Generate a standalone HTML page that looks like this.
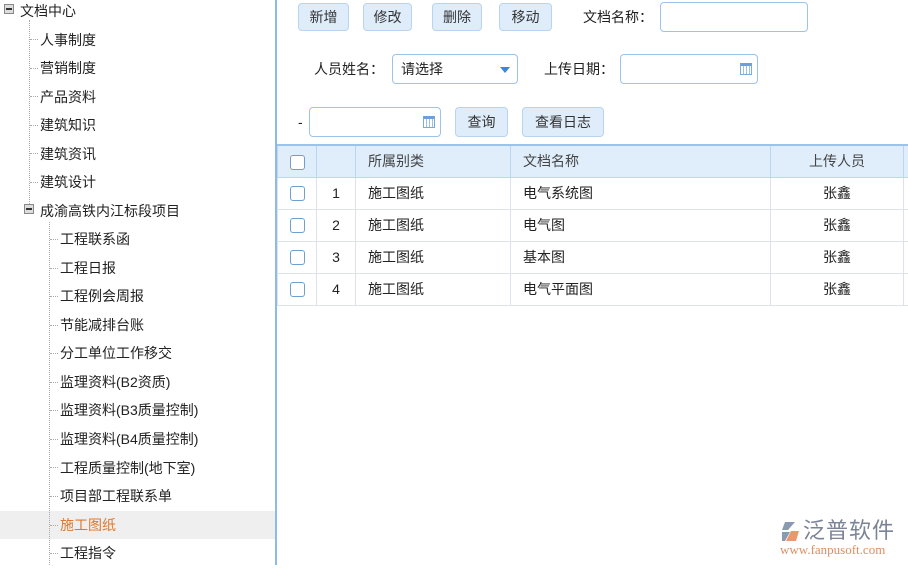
<!DOCTYPE html>
<html><head><meta charset="utf-8"><style>
*{margin:0;padding:0;box-sizing:border-box}
body{width:908px;height:565px;overflow:hidden;background:#fff;font-family:"Liberation Sans","Noto Sans CJK SC",sans-serif;font-size:14px;color:#222;position:relative}
.left{position:absolute;left:0;top:0;width:277px;height:565px;border-right:2px solid #8fb9e8}
.t{position:absolute;height:28px;line-height:22px;white-space:nowrap}
.hl{position:absolute;left:0;top:511px;width:275px;height:28px;background:#efefef}
.vl{position:absolute;border-left:1px dotted #aaa}
.hd{position:absolute;border-top:1px dotted #aaa;width:8px}
.pm{position:absolute;width:10px;height:10px;border:1px solid #888;background:#ddd}
.pm:after{content:"";position:absolute;left:1px;top:3px;width:6px;height:2px;background:#333}
.btn{position:absolute;top:3px;height:28px;border:1px solid #b8d4ee;background:#dfedfb;border-radius:4px;text-align:center;line-height:26px;color:#333}
.inp{position:absolute;height:30px;border:1px solid #9cc3ea;border-radius:4px;background:#fff}
.lbl{position:absolute;line-height:20px}
.cal{position:absolute;right:5px;top:8px;width:12px;height:12px;border:1px solid #7fa9d8;background:repeating-linear-gradient(90deg,#fff 0 2px,#9cc0e6 2px 3px);border-top:3px solid #6f9fd8}
table{position:absolute;left:277px;top:144px;width:640px;table-layout:fixed;border-collapse:collapse;border-top:2px solid #9cc3ea}
td{height:32px;border:1px solid #dde3ea;font-size:14px;padding:0 12px;overflow:hidden;white-space:nowrap}
tr.h td{background:#e0eefb;color:#444;border-color:#bcd6ef}
.cb{display:inline-block;width:15px;height:15px;border:1px solid #6f9fd0;border-radius:3px;background:#fff;vertical-align:middle}
</style></head><body>
<div class="left">
<div class="hl"></div>
<div class="pm" style="left:4px;top:4px"></div>
<div class="vl" style="left:29px;top:20px;height:186px"></div>
<div class="pm" style="left:24px;top:204px"></div>
<div class="vl" style="left:49px;top:222px;height:343px"></div>
<div class="t" style="left:20px;top:0">文档中心</div>
<div class="hd" style="left:30px;top:39px"></div><div class="t" style="left:40px;top:29px">人事制度</div>
<div class="hd" style="left:30px;top:68px"></div><div class="t" style="left:40px;top:57px">营销制度</div>
<div class="hd" style="left:30px;top:96px"></div><div class="t" style="left:40px;top:86px">产品资料</div>
<div class="hd" style="left:30px;top:125px"></div><div class="t" style="left:40px;top:114px">建筑知识</div>
<div class="hd" style="left:30px;top:153px"></div><div class="t" style="left:40px;top:143px">建筑资讯</div>
<div class="hd" style="left:30px;top:182px"></div><div class="t" style="left:40px;top:171px">建筑设计</div>
<div class="t" style="left:40px;top:200px">成渝高铁内江标段项目</div>
<div class="hd" style="left:50px;top:239px"></div><div class="t" style="left:60px;top:228px">工程联系函</div>
<div class="hd" style="left:50px;top:268px"></div><div class="t" style="left:60px;top:257px">工程日报</div>
<div class="hd" style="left:50px;top:296px"></div><div class="t" style="left:60px;top:285px">工程例会周报</div>
<div class="hd" style="left:50px;top:325px"></div><div class="t" style="left:60px;top:314px">节能减排台账</div>
<div class="hd" style="left:50px;top:353px"></div><div class="t" style="left:60px;top:342px">分工单位工作移交</div>
<div class="hd" style="left:50px;top:382px"></div><div class="t" style="left:60px;top:371px">监理资料(B2资质)</div>
<div class="hd" style="left:50px;top:410px"></div><div class="t" style="left:60px;top:399px">监理资料(B3质量控制)</div>
<div class="hd" style="left:50px;top:439px"></div><div class="t" style="left:60px;top:428px">监理资料(B4质量控制)</div>
<div class="hd" style="left:50px;top:467px"></div><div class="t" style="left:60px;top:457px">工程质量控制(地下室)</div>
<div class="hd" style="left:50px;top:496px"></div><div class="t" style="left:60px;top:485px">项目部工程联系单</div>
<div class="hd" style="left:50px;top:525px"></div><div class="t" style="left:60px;top:514px;color:#e0782e">施工图纸</div>
<div class="hd" style="left:50px;top:553px"></div><div class="t" style="left:60px;top:542px">工程指令</div>
</div>
<div class="btn" style="left:298px;width:51px">新增</div>
<div class="btn" style="left:363px;width:49px">修改</div>
<div class="btn" style="left:432px;width:50px">删除</div>
<div class="btn" style="left:499px;width:53px">移动</div>
<div class="lbl" style="left:583px;top:7px">文档名称：</div>
<div class="inp" style="left:660px;top:2px;width:148px"></div>
<div class="lbl" style="left:314px;top:59px">人员姓名：</div>
<div class="inp" style="left:392px;top:54px;width:126px;padding-left:8px;line-height:28px">请选择<span style="position:absolute;right:7px;top:12px;border:5px solid transparent;border-top:6px solid #3a86d8;border-bottom:0"></span></div>
<div class="lbl" style="left:544px;top:59px">上传日期：</div>
<div class="inp" style="left:620px;top:54px;width:138px"><div class="cal"></div></div>
<div class="lbl" style="left:298px;top:112px">-</div>
<div class="inp" style="left:309px;top:107px;width:132px"><div class="cal"></div></div>
<div class="btn" style="left:455px;top:107px;width:53px;height:30px;line-height:28px">查询</div>
<div class="btn" style="left:522px;top:107px;width:82px;height:30px;line-height:28px">查看日志</div>
<table>
<colgroup><col style="width:39px"><col style="width:39px"><col style="width:155px"><col style="width:260px"><col style="width:133px"><col></colgroup>
<tr class="h"><td style="text-align:center;padding:0"><span class="cb"></span></td><td></td><td>所属别类</td><td>文档名称</td><td style="text-align:center">上传人员</td><td></td></tr>
<tr><td style="text-align:center;padding:0"><span class="cb"></span></td><td style="text-align:center">1</td><td>施工图纸</td><td>电气系统图</td><td style="text-align:center">张鑫</td><td></td></tr>
<tr><td style="text-align:center;padding:0"><span class="cb"></span></td><td style="text-align:center">2</td><td>施工图纸</td><td>电气图</td><td style="text-align:center">张鑫</td><td></td></tr>
<tr><td style="text-align:center;padding:0"><span class="cb"></span></td><td style="text-align:center">3</td><td>施工图纸</td><td>基本图</td><td style="text-align:center">张鑫</td><td></td></tr>
<tr><td style="text-align:center;padding:0"><span class="cb"></span></td><td style="text-align:center">4</td><td>施工图纸</td><td>电气平面图</td><td style="text-align:center">张鑫</td><td></td></tr>
</table>
<svg style="position:absolute;left:779px;top:521px" width="22" height="22" viewBox="0 0 22 22"><path d="M6 1h10l-7 8h-6z" fill="#8a9ab0"/><path d="M3 11h8l-5 9h-3z" fill="#8a9ab0"/><path d="M12 10h8l-3 10h-10z" fill="#e89a6e"/></svg>
<div style="position:absolute;left:803px;top:518px;font-size:22px;color:#7a8496;line-height:26px;letter-spacing:1px">泛普软件</div>
<div style="position:absolute;left:780px;top:543px;font-family:'Liberation Serif',serif;font-size:13px;color:#e08d62;line-height:14px">www.fanpusoft.com</div>
</body></html>
